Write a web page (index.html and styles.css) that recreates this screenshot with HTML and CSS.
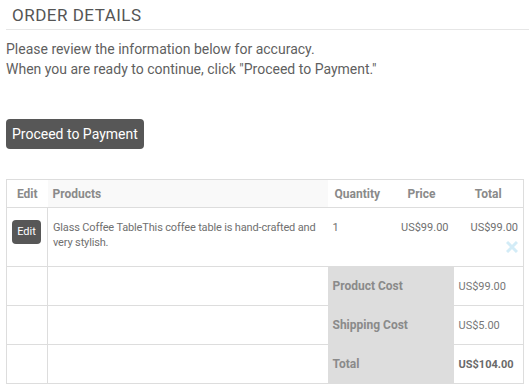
FILE: index.html
```html
<!DOCTYPE html>
<html lang="en">
  <head>
    <meta charset="UTF-8">
    <title>Order Details</title>
    <link rel="stylesheet" href="styles.css">
  </head>
  <body>
    <h2 class="page-title">ORDER DETAILS</h2>

    <p class="intro">
        Please review the information below for accuracy.<br>
        When you are ready to continue, click "Proceed to Payment."
    </p>

    <a href="#" class="pay-button">Proceed to Payment</a>

    <table class="cart">
        <colgroup>
            <col class="w-edit">
            <col class="w-product">
            <col class="w-qty">
            <col class="w-price">
            <col class="w-total">
        </colgroup>
        <thead>
            <tr>
                <th class="col-edit">Edit</th>
                <th class="col-product">Products</th>
                <th class="col-qty">Quantity</th>
                <th class="col-price">Price</th>
                <th class="col-total">Total</th>
            </tr>
        </thead>
        <tbody>
            <tr class="item-row">
                <td class="col-edit"><a href="#" class="edit-button">Edit</a></td>
                <td class="col-product">Glass Coffee TableThis coffee table is hand-crafted and very stylish.</td>
                <td class="col-qty">1</td>
                <td class="col-price">US$99.00</td>
                <td class="col-total">
                    US$99.00
                    <span class="remove">
                        <svg width="12" height="12" viewBox="0 0 12 12">
                            <path d="M1 1 L11 11 M11 1 L1 11" stroke="#d3ecf7" stroke-width="3" fill="none"/>
                        </svg>
                    </span>
                </td>
            </tr>
            <tr class="sum-row">
                <td class="col-edit"></td>
                <td></td>
                <th colspan="2" class="sum-label">Product Cost</th>
                <td class="sum-value">US$99.00</td>
            </tr>
            <tr class="sum-row">
                <td class="col-edit"></td>
                <td></td>
                <th colspan="2" class="sum-label">Shipping Cost</th>
                <td class="sum-value">US$5.00</td>
            </tr>
            <tr class="sum-row">
                <td class="col-edit"></td>
                <td></td>
                <th colspan="2" class="sum-label">Total</th>
                <td class="sum-value grand">US$104.00</td>
            </tr>
        </tbody>
    </table>
  </body>
</html>
```

FILE: styles.css
```css
:root {
    --text-main: #5f5f5f;
    --text-muted: #8a8a8a;
    --line: #dddddd;
    --button-bg: #575757;
}

body {
    font-family: 'Roboto', 'Liberation Sans', sans-serif;
    margin: 0;
    padding: 0 0 0 6px;
    background: #fff;
    color: var(--text-main);
}

.page-title {
    margin: 0;
    padding: 5px 0 4px 6px;
    font-size: 17px;
    font-weight: 400;
    color: #555;
    letter-spacing: 0.5px;
    border-bottom: 1px solid #e6e6e6;
}

.intro {
    margin: 9px 0 0 0;
    font-size: 14px;
    line-height: 20px;
}

.pay-button {
    display: inline-block;
    margin-top: 40px;
    background: var(--button-bg);
    color: #fff;
    text-decoration: none;
    font-size: 14px;
    line-height: 30px;
    padding: 0 6px;
    border-radius: 4px;
}

.cart {
    margin-top: 30px;
    width: 517px;
    table-layout: fixed;
    border-collapse: collapse;
    border: 1px solid var(--line);
    font-size: 11px;
}

.w-edit { width: 41px; }
.w-product { width: 280px; }
.w-qty { width: 62px; }
.w-price { width: 64px; }
.w-total { width: 70px; }

.cart th,
.cart td {
    padding: 0 5px;
    text-align: left;
}

.cart thead th {
    height: 27px;
    font-size: 12px;
    font-weight: 700;
    color: var(--text-muted);
    border-bottom: 1px solid var(--line);
}

.cart thead .col-product {
    background: #f9f9f9;
}

.cart thead .col-edit,
.cart thead .col-price,
.cart thead .col-total {
    text-align: center;
}

.cart thead .col-qty {
    padding-left: 7px;
}

.col-edit {
    border-right: 1px solid var(--line);
}

.cart thead .col-edit {
    border-right: none;
}

.item-row td {
    height: 59px;
    vertical-align: top;
    padding-top: 12px;
    box-sizing: border-box;
    color: #707070;
    line-height: 15px;
    border-bottom: 1px solid var(--line);
}

.item-row .col-product {
    letter-spacing: -0.15px;
    padding-right: 2px;
}

.item-row .col-edit {
    padding: 12px 0 0 5px;
}

.item-row .col-price,
.item-row .col-total {
    text-align: right;
}

.item-row .col-total {
    position: relative;
}

.edit-button {
    display: inline-block;
    width: 29px;
    line-height: 24px;
    text-align: center;
    background: var(--button-bg);
    color: #fff;
    text-decoration: none;
    border-radius: 4px;
    font-size: 11px;
}

.remove {
    position: absolute;
    right: 5px;
    top: 33px;
    line-height: 0;
}

.sum-row td,
.sum-row th {
    height: 38px;
    border-bottom: 1px solid var(--line);
}

.sum-label {
    background: #dddddd;
    color: var(--text-muted);
    font-size: 12px;
    font-weight: 700;
}

.sum-value {
    color: #777;
}

.sum-value.grand {
    font-weight: 700;
    color: #6a6a6a;
}
```
